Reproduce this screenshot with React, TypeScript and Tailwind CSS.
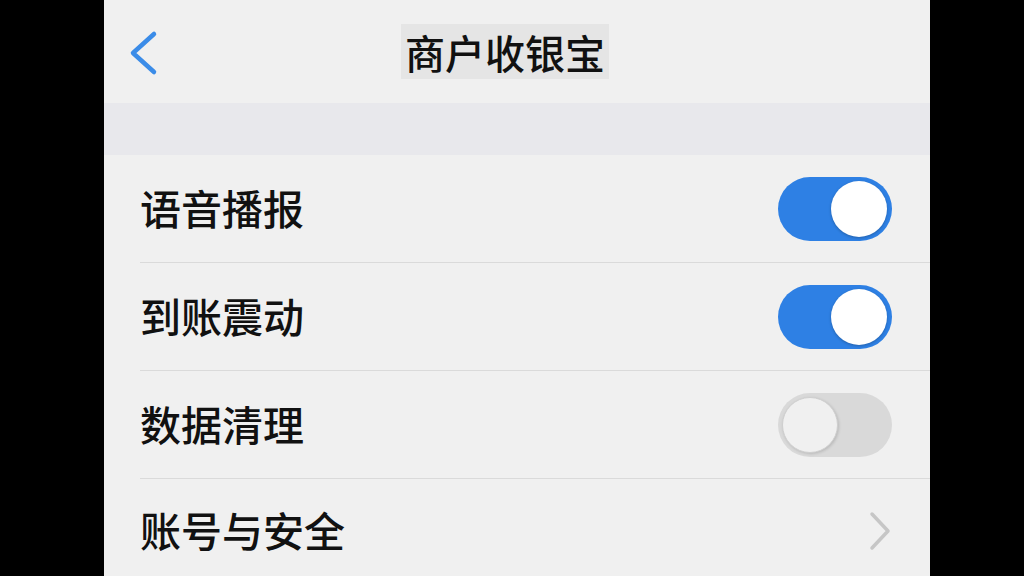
import { useState } from "react";

const font = { fontFamily: '"Noto Sans CJK SC", "Noto Sans", sans-serif' };

function Toggle({ on, onClick }: { on: boolean; onClick: () => void }) {
  return (
    <button
      onClick={onClick}
      className={`relative h-[64px] w-[114px] shrink-0 rounded-full transition-colors ${
        on ? "bg-[#2e80e4]" : "bg-[#d9d9d9]"
      }`}
    >
      <span
        className={`absolute top-[4px] h-[56px] w-[56px] rounded-full ${
          on
            ? "right-[5px] bg-white shadow-[0_1px_3px_rgba(0,0,0,0.25)]"
            : "left-[4px] bg-[#f0f0f0] border border-[#cfcfcf] shadow-[1px_1px_3px_rgba(0,0,0,0.15)]"
        }`}
      />
    </button>
  );
}

export default function App() {
  const [toggles, setToggles] = useState({ voice: true, vibrate: true, clean: false });

  const ROWS: Array<{ key: "voice" | "vibrate" | "clean"; label: string }> = [
    { key: "voice", label: "语音播报" },
    { key: "vibrate", label: "到账震动" },
    { key: "clean", label: "数据清理" },
  ];

  return (
    <div className="flex h-[576px] w-[1024px] overflow-hidden bg-black" style={font}>
      <div className="w-[104px] shrink-0" />
      <div className="flex w-[826px] shrink-0 flex-col bg-[#f0f0f0]">
        {/* nav bar */}
        <div className="flex h-[103px] shrink-0 items-center pl-[24px]">
          <svg width="30" height="46" viewBox="0 0 30 46" className="mt-[2px]">
            <path d="M26 4 L5 23 L26 42" fill="none" stroke="#3b8ce8" strokeWidth="4.5" strokeLinecap="round" strokeLinejoin="round" />
          </svg>
          <div className="ml-[243px] flex h-[55px] items-center bg-[#e5e5e5] px-[4px] text-[40px] font-medium leading-none text-[#111]">
            商户收银宝
          </div>
        </div>

        {/* section gap */}
        <div className="h-[52px] shrink-0 bg-[#e8e8ec]" />

        {ROWS.map(({ key, label }) => (
          <div key={key} className="ml-[36px] flex h-[108px] shrink-0 items-center justify-between border-b border-[#dadada] pr-[38px]">
            <span className="mt-[-3px] text-[41px] font-medium leading-none text-[#111]">{label}</span>
            <Toggle on={toggles[key]} onClick={() => setToggles(p => ({ ...p, [key]: !p[key] }))} />
          </div>
        ))}

        <div className="ml-[36px] flex h-[108px] shrink-0 items-center justify-between pr-[38px]">
          <span className="mt-[-8px] text-[41px] font-medium leading-none text-[#111]">账号与安全</span>
          <svg width="28" height="42" viewBox="0 0 28 42" className="mr-[-2px] mt-[-4px]">
            <path d="M6 4 L22 21 L6 38" fill="none" stroke="#c6c6c6" strokeWidth="3.5" strokeLinecap="round" strokeLinejoin="round" />
          </svg>
        </div>
      </div>
    </div>
  );
}
